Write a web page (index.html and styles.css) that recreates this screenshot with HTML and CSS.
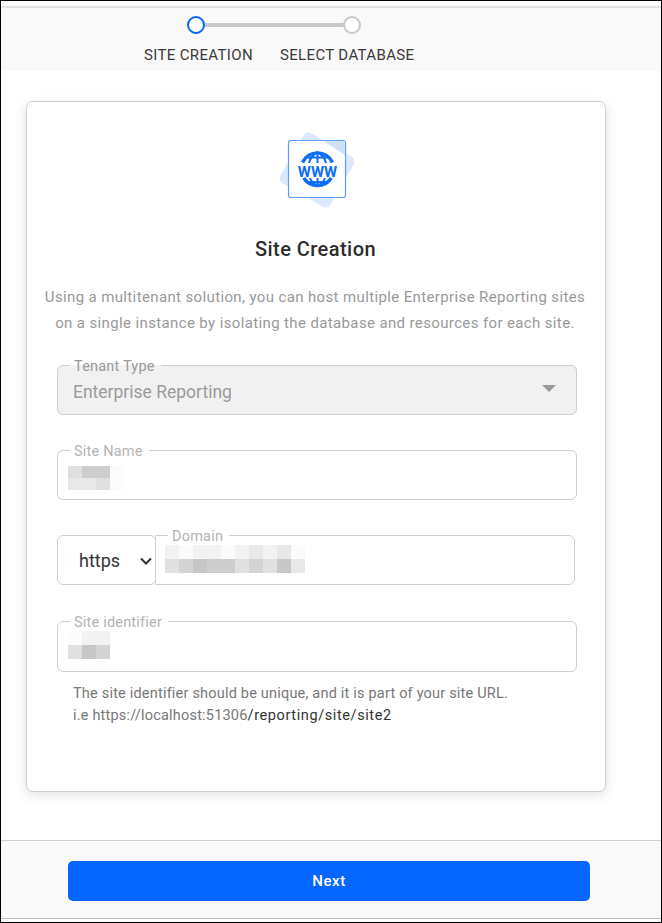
FILE: index.html
```html
<!DOCTYPE html>
<html lang="en">
<head>
<meta charset="utf-8">
<title>Site Creation</title>
<link rel="stylesheet" href="styles.css">
</head>
<body>
<div class="frame">
  <header class="wizard">
    <div class="track">
      <span class="dot dot-active"></span>
      <span class="line"></span>
      <span class="dot"></span>
    </div>
    <div class="steps">
      <span>SITE CREATION</span>
      <span>SELECT DATABASE</span>
    </div>
  </header>
  <main class="content">
    <section class="card">
      <svg class="logo" width="76" height="82" viewBox="0 0 76 82" aria-hidden="true">
        <rect x="10" y="12" width="58" height="58" rx="6" fill="#dce8fd" transform="rotate(30 39 41)"/>
        <rect x="10.5" y="11.5" width="57" height="57" rx="2.5" fill="#fff" stroke="#5a9dfb" stroke-width="1.2"/>
        <path d="M46 12.2H66.9V26Z" fill="#cfdff8"/>
        <path d="M24.5 33.5A16.5 16.5 0 0 1 54.5 33.5M25.7 49A16.5 16.5 0 0 0 53.3 49" fill="none" stroke="#0f6ef5" stroke-width="3.4"/>
        <path d="M39.5 23C34 26 32 30 31 34M39.5 23C45 26 47 30 48 34M39.5 23V34M32 49C33 52 35 55 39.5 57M47 49C46 52 44 55 39.5 57M39.5 49V57M28 28.5H51M29 53H50" fill="none" stroke="#0f6ef5" stroke-width="2"/>
        <text class="logo-text" x="39.5" y="47.5" text-anchor="middle">WWW</text>
      </svg>
      <h1 class="title">Site Creation</h1>
      <p class="intro">Using a multitenant solution, you can host multiple Enterprise Reporting sites<br>on a single instance by isolating the database and resources for each site.</p>

      <fieldset class="field field-disabled">
        <legend>Tenant Type</legend>
        <span class="value">Enterprise Reporting</span>
        <span class="caret"></span>
      </fieldset>

      <fieldset class="field field-name">
        <legend>Site Name</legend>
        <div class="mosaic mosaic-name">
          <i class="s3"></i><i class="s5"></i><i class="s5"></i><i class="s0"></i>
          <i class="s2"></i><i class="s2"></i><i class="s3"></i><i class="s0"></i>
        </div>
      </fieldset>

      <div class="domain-row">
        <select class="scheme">
          <option>https</option>
          <option>http</option>
        </select>
        <fieldset class="field field-domain">
          <legend>Domain</legend>
          <div class="mosaic mosaic-domain">
            <i class="s1"></i><i class="s0"></i><i class="s1"></i><i class="s1"></i><i class="s0"></i><i class="s1"></i><i class="s2"></i><i class="s1"></i><i class="s2"></i><i class="s0"></i>
            <i class="s3"></i><i class="s4"></i><i class="s6"></i><i class="s5"></i><i class="s5"></i><i class="s3"></i><i class="s4"></i><i class="s3"></i><i class="s6"></i><i class="s2"></i>
          </div>
        </fieldset>
      </div>

      <fieldset class="field field-id">
        <legend>Site identifier</legend>
        <div class="mosaic mosaic-id">
          <i class="s0"></i><i class="s1"></i><i class="s1"></i>
          <i class="s3"></i><i class="s6"></i><i class="s4"></i>
        </div>
      </fieldset>

      <p class="hint">The site identifier should be unique, and it is part of your site URL.<br>i.e https://localhost:51306<span class="hint-path">/reporting/site/site2</span></p>
    </section>
  </main>
  <footer class="actions">
    <button class="next" type="button">Next</button>
  </footer>
</div>
</body>
</html>
```

FILE: styles.css
```css
* { box-sizing: border-box; }
html, body { margin: 0; height: 100%; }
body { font-family: Roboto, "Liberation Sans", sans-serif; background: #fff; color: #333; }

.frame {
  height: 923px;
  border: 1px solid #000;
  display: flex;
  flex-direction: column;
  overflow: hidden;
  background: #fff;
}

.wizard {
  height: 65px;
  margin-top: 5px;
  border-top: 2px solid #e3e3e3;
  background: #f9f9f9;
  flex: none;
  padding-top: 8px;
}
.track { display: flex; align-items: center; margin-left: 186px; width: 174px; height: 18px; }
.dot { width: 18px; height: 18px; border-radius: 50%; border: 2px solid #c8c8c8; background: #fff; flex: none; }
.dot-active { border-color: #0566f5; }
.line { flex: 1; height: 4px; background: #c8c8c8; }
.steps { display: flex; gap: 27px; padding-left: 143px; margin-top: 11px; font-size: 15px; line-height: 20px; color: #3a3a3a; letter-spacing: 0.35px; white-space: nowrap; }

.content { flex: 1; padding: 30px 0 0 25px; min-height: 0; }
.card {
  width: 580px;
  height: 691px;
  background: #fff;
  border: 1px solid #cfcfcf;
  border-radius: 7px;
  box-shadow: 0 3px 12px rgba(0, 0, 0, 0.12);
  padding: 27px 28px 0 30px;
  display: flex;
  flex-direction: column;
}
.logo { display: block; margin: 0 0 0 221px; flex: none; }
.logo-text { font-family: Roboto, sans-serif; font-weight: 700; font-size: 15px; fill: #0f6ef5; }
.title { margin: 25px 0 0 -3px; text-align: center; font-size: 20px; line-height: 26px; font-weight: 500; color: #2d2d2d; letter-spacing: 0.45px; }
.intro { margin: 22px 0 0 -17px; width: 550px; text-align: center; font-size: 15px; line-height: 26px; color: #999; letter-spacing: 0.37px; white-space: nowrap; }

.field {
  position: relative;
  margin: 0;
  padding: 0 15px;
  min-width: 0;
  border: 1px solid #cfcfcf;
  border-radius: 6px;
  background: #fff;
}
.field legend {
  padding: 2px 6px 0 4px;
  margin-left: -3px;
  font-size: 14.5px;
  line-height: 17px;
  color: #b3b3b3;
  letter-spacing: 0.2px;
}
.field-disabled { margin-top: 20px; height: 59px; background: #f1f1f1; width: 520px; }
.field-disabled legend { color: #9a9a9a; }
.value { display: block; font-size: 17.5px; line-height: 24px; margin-top: 5px; color: #9b9b9b; }
.caret {
  position: absolute;
  right: 20px;
  top: 10px;
  width: 0;
  height: 0;
  border-left: 7px solid transparent;
  border-right: 7px solid transparent;
  border-top: 7px solid #999;
}
.field-name { margin-top: 26px; height: 59px; width: 520px; }
.domain-row { margin-top: 26px; display: flex; align-items: flex-end; }
.scheme {
  appearance: none;
  width: 99px;
  height: 50px;
  border: 1px solid #cfcfcf;
  border-radius: 6px;
  background: #fff url("data:image/svg+xml,%3Csvg xmlns='http://www.w3.org/2000/svg' width='12' height='8' viewBox='0 0 12 8'%3E%3Cpath d='M1 1.5l5 5 5-5' fill='none' stroke='%23333' stroke-width='2'/%3E%3C/svg%3E") no-repeat 82px 21px;
  padding-left: 21px;
  font-family: Roboto, sans-serif;
  font-size: 18px;
  color: #333;
  flex: none;
}
.field-domain { flex: none; width: 420px; margin-left: -1px; height: 59px; border-radius: 0 6px 6px 0; padding-left: 15px; background: transparent; }
.field-id { margin-top: 27px; height: 60px; width: 520px; }

.mosaic { display: grid; }
.mosaic i { display: block; }
.mosaic-name { grid-template-columns: repeat(4, 14px); grid-auto-rows: 12px; margin: 0 0 0 -5px; padding-top: 6px; }
.mosaic-domain { grid-template-columns: repeat(10, 14px); grid-auto-rows: 14px; margin: 0 0 0 -6px; }
.mosaic-id { grid-template-columns: repeat(3, 14px); grid-auto-rows: 14px; margin: 0 0 0 -5px; }
.s0 { background: #fbfbfb; }
.s1 { background: #f2f2f2; }
.s2 { background: #e8e8e8; }
.s3 { background: #e0e0e0; }
.s4 { background: #d4d3d3; }
.s5 { background: #cdcdcd; }
.s6 { background: #c8c6c6; }

.hint { margin: 11px 0 0 16px; font-size: 14.5px; line-height: 22px; color: #777; letter-spacing: 0.2px; white-space: nowrap; }
.hint-path { color: #333; letter-spacing: 0.6px; }

.actions {
  flex: none;
  height: 79px;
  margin-bottom: 3px;
  border-top: 1px solid #cfcfcf;
  border-bottom: 1px solid #bdbdbd;
  background: #f9f9f9;
  padding: 20px 0 0 67px;
}
.next {
  display: block;
  width: 522px;
  height: 40px;
  border: 0;
  border-radius: 5px;
  background: #0566ff;
  color: #fff;
  font-family: Roboto, sans-serif;
  font-size: 15px;
  font-weight: 500;
  letter-spacing: 0.6px;
}
```
